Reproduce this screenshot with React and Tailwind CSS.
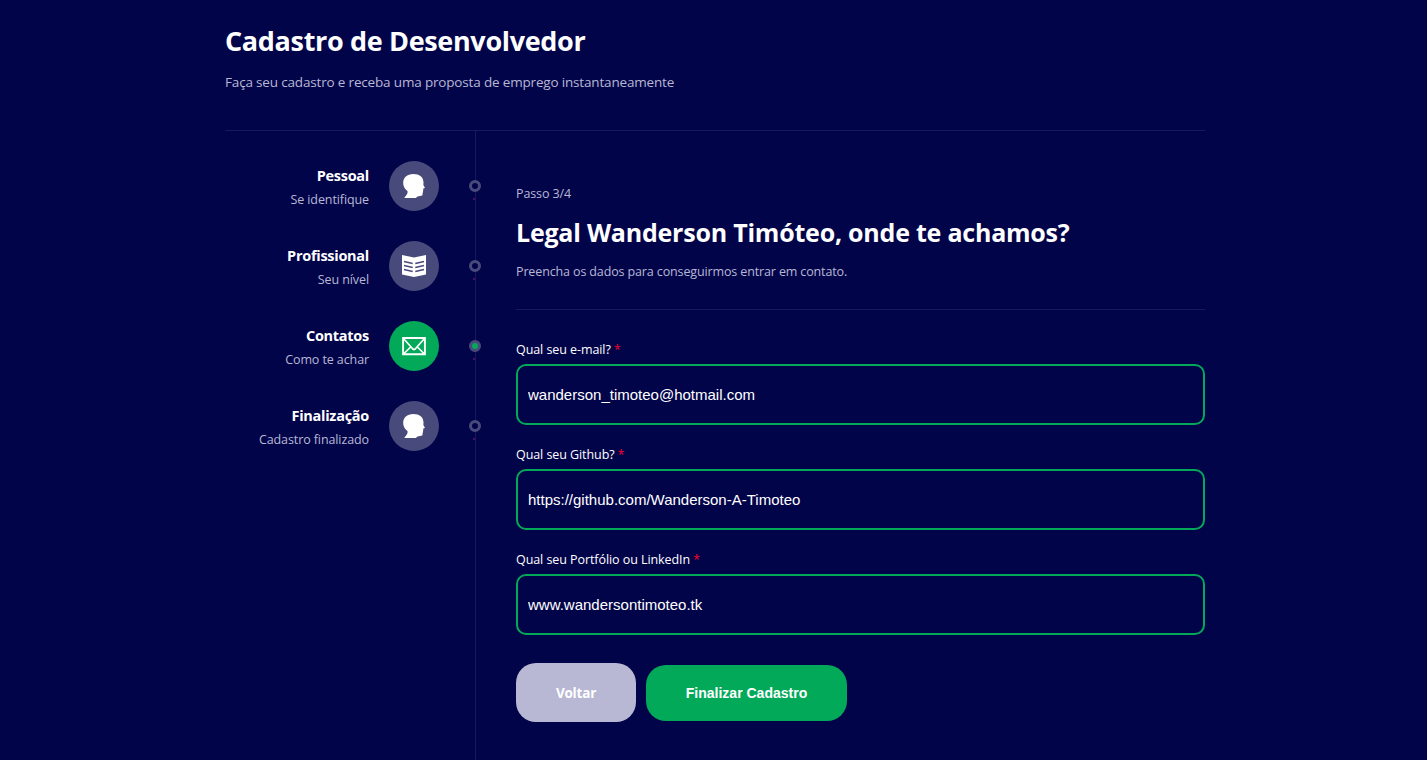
const HeadIcon = () => (
  <svg viewBox="0 0 32 32" className="h-8 w-8" fill="#fff">
    <path d="M15.200 3.900C9 3.900 5.200 7.700 5.200 12.800c0 2.300.7 4.100 1.500 5.400.8 1.200 1.900 2.100 2.700 2.900.5 1 .2 2.100-.4 3.100L6.200 28H17.800l1.800-1.500 4.700-.9.4-2.600.5-2.200.1-2.200 1.500-.7c.2-.6-.8-1.200-1.400-2.900l.1-2.700C25.300 6.900 21.600 3.900 15.200 3.900z" />
  </svg>
);

const BookIcon = () => (
  <svg viewBox="0 0 32 32" className="h-8 w-8">
    <path d="M4 5 16 7.400 28 5v19.600L16 27 4 24.600z" fill="#fff" />
    <path
      d="M6 11.400l8.700 2M6 15.400l8.700 2M6 19.400l8.700 2M26 11.400l-8.700 2M26 15.400l-8.700 2M26 19.400l-8.700 2"
      stroke="#494a7c"
      strokeWidth="1.500"
      fill="none"
    />
  </svg>
);

const MailIcon = () => (
  <svg viewBox="0 0 32 32" className="h-8 w-8" fill="none" stroke="#fff" strokeWidth="1.900">
    <path d="M5.100 8h21.800v16.200H5.100z" />
    <path d="M5.500 8.500 14.800 19q1.200 1 2.400 0l9.300-10.500M5.500 24l7.700-7.500M26.500 24l-7.700-7.500" strokeWidth="1.700" />
  </svg>
);

const steps = [
  { title: "Pessoal", description: "Se identifique", Icon: HeadIcon },
  { title: "Profissional", description: "Seu nível", Icon: BookIcon },
  { title: "Contatos", description: "Como te achar", Icon: MailIcon, active: true },
  { title: "Finalização", description: "Cadastro finalizado", Icon: HeadIcon },
];

const fields = [
  { label: "Qual seu e-mail?", value: "wanderson_timoteo@hotmail.com" },
  { label: "Qual seu Github?", value: "https://github.com/Wanderson-A-Timoteo" },
  { label: "Qual seu Portfólio ou LinkedIn", value: "www.wandersontimoteo.tk" },
];

function Step({ title, description, Icon, active }) {
  return (
    <li className="flex h-[50px] items-center">
      <div className="w-36 pt-[3px] text-right">
        <p className="text-[14.5px] leading-5 font-bold tracking-[-0.28px]">{title}</p>
        <p className="mt-1 text-[12.5px] leading-5 tracking-[-0.1px] text-[#b8b8d4]">{description}</p>
      </div>
      <div className={`ml-5 flex h-[50px] w-[50px] items-center justify-center rounded-full ${active ? "bg-[#02a959]" : "bg-[#494a7c]"}`}>
        <Icon />
      </div>
      <div className="relative ml-[30px] h-3 w-3 shrink-0">
        <div className={`h-3 w-3 rounded-full border-3 border-[#494a7c] ${active ? "bg-[#02a959]" : "bg-[#02044a]"}`} />
        <span className="absolute top-[18px] left-1 h-0.5 w-0.5 bg-[#4b0a78]" />
      </div>
    </li>
  );
}

function Field({ label, value }) {
  return (
    <label className="mb-5 block">
      <span className="block text-[12.5px] leading-5 tracking-[-0.07px]">
        {label} <span className="text-[12px] leading-none text-[#ff002a]">*</span>
      </span>
      <input
        defaultValue={value}
        className="mt-1 block h-[61px] w-full rounded-[10px] border-2 border-[#02a959] bg-transparent px-2.5 font-['Liberation_Sans',sans-serif] text-[15px] outline-none"
      />
    </label>
  );
}

export default function App() {
  return (
    <div className="h-[760px] overflow-hidden bg-[#02044a] pl-[225px] font-['Open_Sans','Noto_Sans',sans-serif] text-white">
      <div className="flex h-full w-[980px] flex-col">
        <header className="h-[131px] shrink-0 border-b border-[#16195c] pt-[22px]">
          <h1 className="text-[27px] leading-[38px] font-bold tracking-[-0.34px]">Cadastro de Desenvolvedor</h1>
          <p className="mt-3 text-[13.5px] leading-5 tracking-[-0.17px] text-[#b8b8d4]">
            Faça seu cadastro e receba uma proposta de emprego instantaneamente
          </p>
        </header>
        <div className="flex flex-1">
          <aside className="w-[251px] shrink-0 border-r border-[#16195c]">
            <ul className="flex w-64 flex-col gap-[30px] pt-[30px]">
              {steps.map((step) => (
                <Step key={step.title} {...step} />
              ))}
            </ul>
          </aside>
          <main className="flex-1 pt-[53px] pl-10">
            <p className="text-[12.5px] leading-5 tracking-[-0.1px] text-[#b8b8d4]">Passo 3/4</p>
            <h2 className="mt-[11px] text-[25px] leading-[34px] font-bold tracking-[-0.22px]">
              Legal Wanderson Timóteo, onde te achamos?
            </h2>
            <p className="mt-[13px] text-[12.5px] leading-5 tracking-[-0.13px] text-[#b8b8d4]">
              Preencha os dados para conseguirmos entrar em contato.
            </p>
            <hr className="mt-[27px] mb-[30px] border-[#16195c]" />
            <form>
              {fields.map((field) => (
                <Field key={field.label} {...field} />
              ))}
              <div className="mt-7 flex items-center gap-2.5 text-sm font-bold">
                <a className="flex h-[59px] w-[120px] items-center justify-center rounded-[20px] bg-[#b8b8d4] pt-[3px] text-[13.5px] tracking-[-0.2px]">
                  Voltar
                </a>
                <button
                  type="button"
                  className="h-14 w-[201px] rounded-[20px] bg-[#02a959] font-['Liberation_Sans',sans-serif]"
                >
                  Finalizar Cadastro
                </button>
              </div>
            </form>
          </main>
        </div>
      </div>
    </div>
  );
}
